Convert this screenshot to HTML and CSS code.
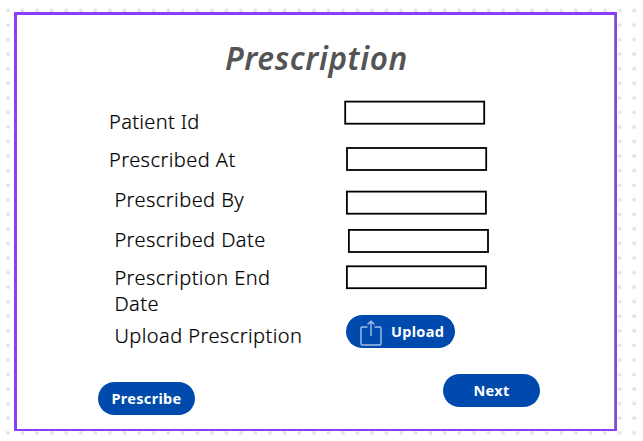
FILE: index.html
```html
<!DOCTYPE html>
<html lang="en">
<head>
<meta charset="utf-8">
<title>Prescription</title>
<link rel="stylesheet" href="styles.css">
</head>
<body>
<main class="frame">
  <h1 class="title">Prescription</h1>
  <div class="form">
    <div class="labels">
      <div class="label l1">Patient Id</div>
      <div class="label l2">Prescribed At</div>
      <div class="label l3">Prescribed By</div>
      <div class="label l4">Prescribed Date</div>
      <div class="label l5">Prescription End<br>Date</div>
      <div class="label l6">Upload Prescription</div>
    </div>
    <div class="fields">
      <svg class="field f1" width="142" height="24"><rect x="1.2" y="1.6" width="139" height="22.1"/></svg>
      <svg class="field f2" width="142" height="24"><rect x="1" y="1" width="139.2" height="22"/></svg>
      <svg class="field f3" width="142" height="24"><rect x=".9" y="1.6" width="139" height="22.1"/></svg>
      <svg class="field f4" width="142" height="24"><rect x=".9" y=".9" width="139.1" height="22.1"/></svg>
      <svg class="field f5" width="142" height="24"><rect x=".9" y="1.3" width="139" height="21.9"/></svg>
      <div class="button upload">
        <svg class="icon" width="22" height="26" viewBox="0 0 22 26"><path d="M7.5 7H2.2Q1 7 1 8.2V23.8Q1 25 2.2 25H19.8Q21 25 21 23.8V8.2Q21 7 19.8 7H14.5M11 16V1.2M7.6 4.6L11 1.2L14.4 4.6"/></svg>
        <span>Upload</span>
      </div>
    </div>
  </div>
  <div class="actions">
    <div class="button prescribe"><span>Prescribe</span></div>
    <div class="button next"><span>Next</span></div>
  </div>
</main>
</body>
</html>
```
FILE: styles.css
```css
* { box-sizing: border-box; }
body {
  margin: 0;
  width: 643px;
  height: 441px;
  padding: 12px 0 0 14px;
  overflow: hidden;
  font-family: "Noto Sans", sans-serif;
  background: #fff radial-gradient(circle at 8px 8px, #e0e2e8 1.6px, transparent 2.1px) 0 2.5px / 14.57px 14.57px;
}
.frame {
  width: 603px;
  height: 419px;
  border: 3px solid #8b3dff;
  border-bottom-width: 2px;
  border-right-width: 2px;
  box-shadow: inset -1px 0 #858585;
  background: #fff;
}
.title {
  margin: 21px 0 0 208px;
  height: 44px;
  line-height: 44px;
  font-size: 31.5px;
  font-weight: 600;
  font-style: italic;
  letter-spacing: .6px;
  color: #545454;
  white-space: nowrap;
}
.form {
  display: flex;
  height: 282px;
}
.labels {
  width: 327px;
  padding: 29px 0 0 92px;
}
.label {
  font-size: 20px;
  line-height: 26px;
  font-weight: 300;
  letter-spacing: .44px;
  -webkit-text-stroke: .2px #000;
  color: #000;
  white-space: nowrap;
}
.l1 { letter-spacing: .35px; }
.l2 { margin-top: 12px; }
.l3, .l4 { margin-top: 14px; }
.l5 { margin-top: 12px; }
.l6 { margin-top: 6px; }
.l3, .l4, .l5, .l6 { margin-left: 5.4px; }
.fields { padding-top: 20px; }
.field {
  display: block;
  overflow: visible;
  margin-left: 2px;
  fill: none;
  stroke: #000;
  stroke-width: 1.8;
}
.f1 { margin-left: 0; }
.f2 { margin-top: 23px; }
.f3 { margin-top: 19px; }
.f4 { margin: 15px 0 0 4px; }
.f5 { margin-top: 12px; }
.button {
  display: flex;
  align-items: center;
  justify-content: center;
  width: 97px;
  height: 33px;
  padding-bottom: 1px;
  border-radius: 17px;
  background: #004aad;
  color: #fff;
  font-size: 14.5px;
  font-weight: 700;
  letter-spacing: .3px;
}
.upload {
  width: 109px;
  margin: 26px 0 0 2px;
  justify-content: flex-start;
  padding: 0 0 2px 14px;
}
.icon {
  margin: 5px 9px 0 0;
  fill: none;
  stroke: #a3bfe4;
  stroke-width: 1.4;
}
.actions {
  display: flex;
  justify-content: space-between;
  align-items: flex-start;
  padding: 12px 75px 0 81px;
}
.prescribe {
  margin-top: 8px;
  padding-bottom: 2px;
}
```
